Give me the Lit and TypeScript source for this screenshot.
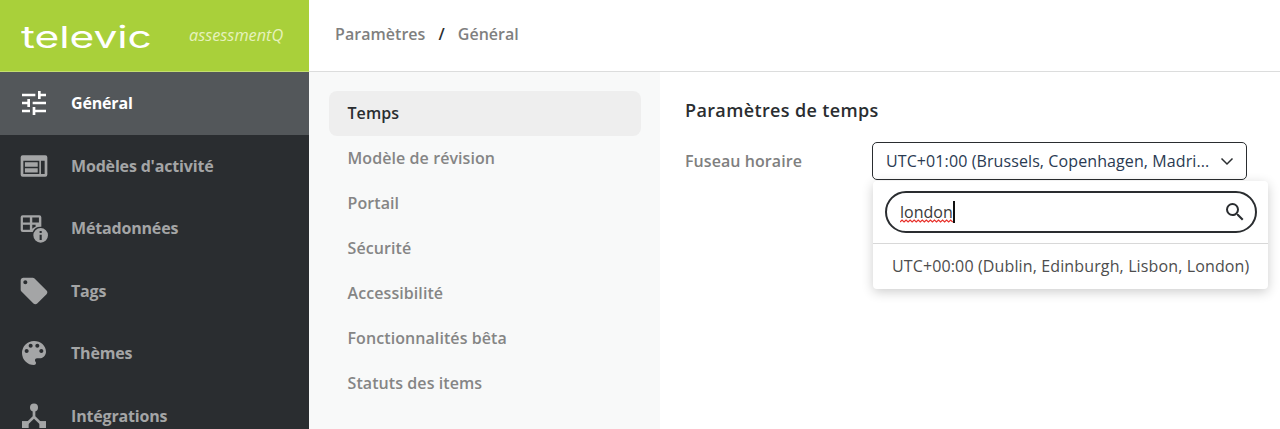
import { LitElement, html, css, svg } from "lit";
import { customElement } from "lit/decorators.js";

const icons: Record<string, any> = {
  tune: svg`<path d="M3 17v2h6v-2H3zM3 5v2h10V5H3zm10 16v-2h8v-2h-8v-2h-2v6h2zM7 9v2H3v2h4v2h2V9H7zm14 4v-2H11v2h10zm-6-4h2V7h4V5h-4V3h-2v6z"/>`,
  web: svg`<path fill-rule="evenodd" d="M3.500 4h17A1.500 1.500 0 0 1 22 5.500v13a1.500 1.500 0 0 1-1.500 1.500h-17A1.500 1.500 0 0 1 2 18.500v-13A1.500 1.500 0 0 1 3.500 4zM4 8v10h12V8H4zm1.200 1.200h9.600v3.300H5.200V9.200zm0 4.400h9.600v3.300H5.200v-3.300zM17.200 8v10H20V8h-2.800z"/>`,
  meta: svg`<path fill-rule="evenodd" d="M3.500 2.500h12.500A1.500 1.500 0 0 1 17.500 4v7a6.500 6.500 0 0 0-6.500 4H3.500A1.500 1.500 0 0 1 2 13.500V4a1.500 1.500 0 0 1 1.500-1.500zM3.700 7.800h5.200V4.200H3.700v3.600zm7 0h5V4.200h-5v3.600zM3.700 13.300h5.200V9.500H3.700v3.800zm7-3.800v3a6.500 6.500 0 0 1 2.500-1.500v-1.500h-2.500z"/><path fill-rule="evenodd" d="M17 12a5.500 5.500 0 1 1 0 11 5.500 5.500 0 0 1 0-11zm-.8 2.200v1.600h1.600v-1.600h-1.600zm0 2.800v4h1.600v-4h-1.600z"/>`,
  tag: svg`<path d="M21.410 11.580l-9-9C12.050 2.220 11.550 2 11 2H4c-1.100 0-2 .9-2 2v7c0 .55.220 1.050.590 1.420l9 9c.360.360.860.580 1.410.580.550 0 1.050-.220 1.410-.590l7-7c.370-.360.590-.860.590-1.410 0-.550-.230-1.060-.590-1.420zM5.500 7C4.670 7 4 6.330 4 5.500S4.670 4 5.500 4 7 4.670 7 5.500 6.330 7 5.500 7z"/>`,
  palette: svg`<path d="M12 3a9 9 0 0 0 0 18c.830 0 1.500-.670 1.500-1.500 0-.390-.150-.740-.390-1.010-.230-.260-.380-.610-.380-.990 0-.830.670-1.500 1.500-1.500H16c2.760 0 5-2.240 5-5 0-4.420-4.030-8-9-8zm-5.500 9c-.830 0-1.500-.670-1.500-1.500S5.670 9 6.500 9 8 9.670 8 10.500 7.330 12 6.500 12zm3-4C8.670 8 8 7.330 8 6.500S8.670 5 9.500 5s1.500.670 1.500 1.500S10.330 8 9.500 8zm5 0c-.830 0-1.500-.670-1.500-1.500S13.670 5 14.500 5s1.500.670 1.500 1.500S15.330 8 14.500 8zm3 4c-.830 0-1.500-.670-1.500-1.500S16.670 9 17.500 9s1.500.670 1.500 1.500-.670 1.500-1.500 1.500z"/>`,
  hub: svg`<circle cx="12" cy="5.600" r="3"/><path d="M11 8h2v4.200l4.700 4.600-1.400 1.400L12 14l-4.300 4.200-1.400-1.400 4.700-4.600z"/><rect x="3" y="15.800" width="5" height="5.200"/><rect x="16" y="15.800" width="5" height="5.200"/>`,
};

const nav = [
  ["tune", "Général"],
  ["web", "Modèles d'activité"],
  ["meta", "Métadonnées"],
  ["tag", "Tags"],
  ["palette", "Thèmes"],
  ["hub", "Intégrations"],
];
const sub = ["Temps", "Modèle de révision", "Portail", "Sécurité", "Accessibilité", "Fonctionnalités bêta", "Statuts des items"];

@customElement("app-root")
export class AppRoot extends LitElement {
  static styles = css`
    :host { display: block; width: 1280px; height: 429px; overflow: hidden; font-family: "Open Sans", sans-serif; background: #fff; color: #2a2d30; }
    .page { display: flex; height: 429px; }
    .side { width: 309px; flex: none; background: #2a2d30; overflow: hidden; }
    .brand { height: 71px; background: #a9d03a; border-bottom: 1px solid #c4de70; display: flex; align-items: center; padding-left: 21px; position: relative; }
    .logo { font-family: "Inter", sans-serif; font-weight: 400; font-size: 31px; line-height: 1; color: #fff; transform: scale(1.37, .98); transform-origin: left center; display: block; margin-top: 1px; }
    .aq { position: absolute; left: 189px; top: 24px; font-size: 16.300px; line-height: 22px; font-style: italic; color: #e6f2bd; }
    .nav { height: 62.500px; box-sizing: border-box; padding: 0 0 1px 17.500px; display: flex; align-items: center; gap: 21.500px; color: #a4a5a6; font-size: 16px; font-weight: 700; letter-spacing: -.17px; }
    .nav.on { background: #53575a; color: #fff; height: 63px; }
    .nav svg { width: 32px; height: 32px; fill: currentColor; flex: none; }
    .main { flex: 1; min-width: 0; display: flex; flex-direction: column; }
    .top { flex: none; border-bottom: 1px solid #dcdddd; display: flex; align-items: center; padding-left: 26px; gap: 13px; font-size: 16px; font-weight: 600; color: #7f7f7f; padding-bottom: 3px; height: 68px; letter-spacing: .04px; }
    .top b { color: #2a2d30; font-weight: 600; }
    .body { flex: 1; display: flex; }
    .subnav { width: 351px; flex: none; background: #f8f9f9; padding: 19px 19px 0 20px; box-sizing: border-box; }
    .sub { height: 45px; box-sizing: border-box; display: flex; align-items: center; padding: 0 0 2px 18.500px; font-size: 16px; font-weight: 600; color: #858585; border-radius: 8px; letter-spacing: .08px; }
    .sub.on { background: #eeeeee; color: #2a2d30; }
    .content { flex: 1; padding: 26px 0 0 25px; position: relative; }
    h2 { margin: 0; font-size: 18px; line-height: 25px; font-weight: 600; color: #2a2d30; letter-spacing: .36px; }
    .row { display: flex; align-items: center; margin-top: 19px; }
    .label { width: 187px; font-size: 16px; font-weight: 600; color: #7f7f7f; letter-spacing: .07px; }
    .select { width: 375px; height: 38px; box-sizing: border-box; border: 1px solid #2a2d30; border-radius: 5px; display: flex; align-items: center; justify-content: space-between; padding: 0 11px 0 13px; font-size: 16px; color: #2a3a52; letter-spacing: .1px; }
    .select svg { width: 16px; height: 16px; fill: none; stroke: #2a2d30; stroke-width: 1.500; flex: none; }
    .drop { position: absolute; left: 213px; top: 109px; width: 395px; height: 108px; background: #fff; border-radius: 4px; box-shadow: 0 3px 12px rgba(0,0,0,.2); }
    .search { margin: 10px 11.500px 0; height: 42px; box-sizing: border-box; border: 2px solid #2a2d30; border-radius: 21px; display: flex; align-items: center; justify-content: space-between; padding: 0 8px 0 13.500px; font-size: 16px; color: #3a3a3a; }
    .typed { position: relative; border-right: 2px solid #111; line-height: 22px; display: block; }
    .typed svg { position: absolute; left: 0; bottom: 0; width: 100%; height: 4px; }
    .search > svg { width: 24px; height: 24px; fill: #2a2d30; }
    .div { height: 1px; background: #d8d8d8; margin-top: 10px; }
    .opt { padding-left: 19px; margin-top: 10px; font-size: 16px; line-height: 24px; color: #4d4d4d; white-space: nowrap; letter-spacing: .13px; }
  `;

  render() {
    return html`<div class="page">
      <aside class="side">
        <div class="brand"><span class="logo">televic</span><span class="aq">assessmentQ</span></div>
        ${nav.map(([i, t], n) => html`<div class="nav ${n === 0 ? "on" : ""}"><svg viewBox="0 0 24 24">${icons[i]}</svg><span>${t}</span></div>`)}
      </aside>
      <div class="main">
        <div class="top"><span>Paramètres</span><b>/</b><span>Général</span></div>
        <div class="body">
          <nav class="subnav">${sub.map((t, n) => html`<div class="sub ${n === 0 ? "on" : ""}">${t}</div>`)}</nav>
          <section class="content">
            <h2>Paramètres de temps</h2>
            <div class="row">
              <div class="label">Fuseau horaire</div>
              <div class="select"><span>UTC+01:00 (Brussels, Copenhagen, Madri...</span><svg viewBox="0 0 16 16"><path d="M2.500 5.500l5.500 5.500 5.500-5.500"/></svg></div>
            </div>
            <div class="drop">
              <div class="search">
                <span class="typed">london<svg viewBox="0 0 52 4" preserveAspectRatio="none"><path d="M0 3 L2 1 L4 3 L6 1 L8 3 L10 1 L12 3 L14 1 L16 3 L18 1 L20 3 L22 1 L24 3 L26 1 L28 3 L30 1 L32 3 L34 1 L36 3 L38 1 L40 3 L42 1 L44 3 L46 1 L48 3 L50 1 L52 3" fill="none" stroke="#e8302a" stroke-width="1.200"/></svg></span>
                <svg viewBox="0 0 24 24"><path d="M15.500 14h-.790l-.280-.270A6.470 6.470 0 0 0 16 9.500 6.500 6.500 0 1 0 9.500 16c1.610 0 3.090-.590 4.230-1.570l.270.280v.790l5 4.990L20.490 19l-4.990-5zm-6 0C7.010 14 5 11.990 5 9.500S7.010 5 9.500 5 14 7.010 14 9.500 11.990 14 9.500 14z"/></svg>
              </div>
              <div class="div"></div>
              <div class="opt">UTC+00:00 (Dublin, Edinburgh, Lisbon, London)</div>
            </div>
          </section>
        </div>
      </div>
    </div>`;
  }
}
